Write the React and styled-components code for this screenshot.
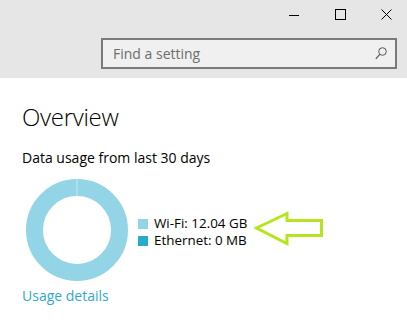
import React from "react";
import styled, { createGlobalStyle } from "styled-components";

const Global = createGlobalStyle`
  html, body { margin: 0; padding: 0; background: #ffffff; }
  body { font-family: "Open Sans", "Noto Sans", sans-serif; width: 407px; height: 328px; overflow: hidden; }
`;

const Window = styled.div`
  width: 407px;
  height: 328px;
  display: flex;
  flex-direction: column;
  background: #ffffff;
  overflow: hidden;
`;

const Header = styled.div`
  height: 78px;
  background: #e6e6e6;
  display: flex;
  flex-direction: column;
  flex-shrink: 0;
`;

const TitleBar = styled.div`
  height: 29px;
  display: flex;
  justify-content: flex-end;
  margin-right: -2px;
`;

const CaptionButton = styled.div`
  width: 46px;
  height: 29px;
  display: flex;
  align-items: center;
  justify-content: center;
  color: #000;
`;

const SearchRow = styled.div`
  display: flex;
  justify-content: flex-end;
  padding: 9px 10px 0 0;
`;

const SearchBox = styled.div`
  width: 274px;
  height: 27px;
  border: 2px solid #7a7a7a;
  background: #f0f0f0;
  display: flex;
  align-items: center;
  justify-content: space-between;
  padding: 0 8px 0 10px;
  box-sizing: content-box;
`;

const Placeholder = styled.span`
  font-size: 14px;
  color: #6d6d6d;
`;

const Content = styled.div`
  padding: 0 0 0 22px;
  display: flex;
  flex-direction: column;
`;

const Title = styled.h1`
  margin: 24px 0 0 0;
  font-size: 24px;
  font-weight: 300;
  line-height: 30px;
  color: #000;
  letter-spacing: -0.3px;
`;

const Subtitle = styled.div`
  margin-top: 17px;
  font-size: 14px;
  line-height: 18px;
  color: #000;
`;

const UsageRow = styled.div`
  margin-top: 12px;
  margin-left: 4px;
  display: flex;
  align-items: center;
`;

const Legend = styled.div`
  margin-left: 10px;
  margin-top: 4px;
  display: flex;
  flex-direction: column;
`;

const LegendItem = styled.div`
  display: flex;
  align-items: center;
  height: 17px;
  line-height: 17px;
  font-size: 13.4px;
  color: #000;
`;

const Swatch = styled.span`
  width: 10px;
  height: 10px;
  background: ${(p) => p.color};
  margin-right: 6px;
  flex-shrink: 0;
`;

const Arrow = styled.svg`
  margin-left: 7px;
  margin-top: -2px;
  flex-shrink: 0;
`;

const Link = styled.a`
  margin-top: 6px;
  font-size: 14px;
  line-height: 18px;
  color: #2fa9cf;
  text-decoration: none;
`;

export default function App() {
  return (
    <Window>
      <Global />
      <Header>
        <TitleBar>
          <CaptionButton>
            <svg width="10" height="10" viewBox="0 0 10 10">
              <line x1="0" y1="5.5" x2="10" y2="5.5" stroke="#000" strokeWidth="1" />
            </svg>
          </CaptionButton>
          <CaptionButton>
            <svg width="11" height="11" viewBox="0 0 11 11">
              <rect x="0.5" y="0.5" width="10" height="10" fill="none" stroke="#000" strokeWidth="1" />
            </svg>
          </CaptionButton>
          <CaptionButton>
            <svg width="11" height="11" viewBox="0 0 11 11">
              <path d="M0.5 0.5 L10.5 10.5 M10.5 0.5 L0.5 10.5" stroke="#000" strokeWidth="1" />
            </svg>
          </CaptionButton>
        </TitleBar>
        <SearchRow>
          <SearchBox>
            <Placeholder>Find a setting</Placeholder>
            <svg width="12" height="13" viewBox="0 0 12 13">
              <circle cx="7.5" cy="4.5" r="3.8" fill="none" stroke="#555" strokeWidth="1" />
              <line x1="4.8" y1="7.3" x2="0.8" y2="11.8" stroke="#555" strokeWidth="1.2" />
            </svg>
          </SearchBox>
        </SearchRow>
      </Header>
      <Content>
        <Title>Overview</Title>
        <Subtitle>Data usage from last 30 days</Subtitle>
        <UsageRow>
          <svg width="102" height="102" viewBox="0 0 102 102">
            <circle cx="51" cy="51" r="42.5" fill="none" stroke="#93d5e6" strokeWidth="17" />
            <line x1="51" y1="0" x2="51" y2="17" stroke="#c4e9f2" strokeWidth="1" />
          </svg>
          <Legend>
            <LegendItem>
              <Swatch color="#93d5e6" />
              Wi-Fi: 12.04 GB
            </LegendItem>
            <LegendItem>
              <Swatch color="#27abcb" />
              Ethernet: 0 MB
            </LegendItem>
          </Legend>
          <Arrow width="72" height="36" viewBox="0 0 72 36">
            <polygon
              points="2.5,17 33,2.5 33,9.5 67.5,9.5 67.5,24.5 33,24.5 33,32.5"
              fill="none"
              stroke="#b5e61d"
              strokeWidth="3"
              strokeLinejoin="miter"
            />
          </Arrow>
        </UsageRow>
        <Link href="#">Usage details</Link>
      </Content>
    </Window>
  );
}
